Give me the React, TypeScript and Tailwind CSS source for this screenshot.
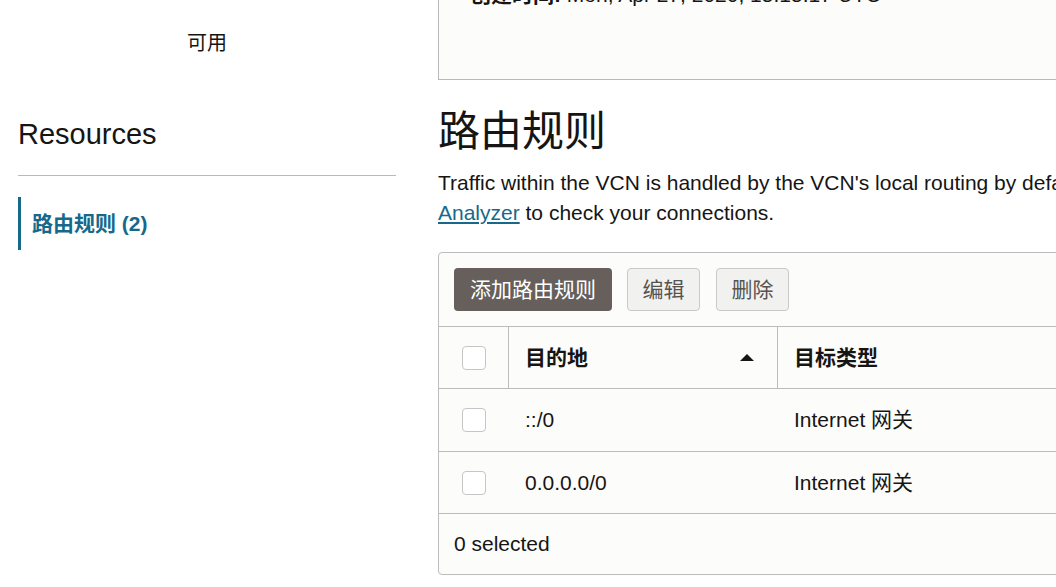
const font = "font-['Liberation_Sans','Noto_Sans_CJK_SC',sans-serif]";

function Checkbox() {
  return <span className="block h-6 w-6 rounded-[4px] border border-[#c6c6c4] bg-white" />;
}

const rows = [
  { dest: "::/0", type: "Internet 网关", h: "h-[63px]" },
  { dest: "0.0.0.0/0", type: "Internet 网关", h: "h-[62px]" },
];

export default function App() {
  return (
    <div className={`${font} h-[587px] w-[1056px] overflow-hidden bg-white text-[21px] text-[#161513]`}>
      <div className="flex gap-6">
        {/* sidebar */}
        <aside className="w-[414px] shrink-0 px-[18px]">
          <p className="mt-[30px] text-center text-[20px] leading-[26px]">可用</p>
          <h2 className="mt-[61px] text-[29px] leading-[34px]">Resources</h2>
          <hr className="mt-[24px] border-t border-[#b9b9b7]" />
          <nav className="mt-[21px]">
            <a className="flex h-[53px] items-center border-l-[3px] border-[#16698a] pl-[11px] font-bold text-[#16698a]">
              路由规则 (2)
            </a>
          </nav>
        </aside>

        {/* main */}
        <main className="w-[800px] shrink-0">
          <div className="-mt-[30px] h-[110px] whitespace-nowrap border border-[#b9b9b7] bg-[#fcfcfb] px-[31px] pt-[12px] leading-6">
            <span className="font-bold">创建时间:</span> Mon, Apr 27, 2020, 15:15:17 UTC
          </div>

          <h1 className="mt-[27px] text-[42px] font-normal leading-[50px]">路由规则</h1>
          <p className="mt-[11px] whitespace-nowrap leading-[30px]">
            Traffic within the VCN is handled by the VCN's local routing by default. Use Network Path
            <br />
            <a className="text-[#16698a] underline">Analyzer</a> to check your connections.
          </p>

          <div className="mt-[24px] rounded-[4px] border border-[#bcbcba] bg-[#fcfcfb]">
            <div className="flex px-[15px] py-[15px]">
              <button className="h-[43px] w-[158px] rounded-[4px] bg-[#665f5b] text-white">添加路由规则</button>
              <button className="ml-[15px] h-[43px] w-[73px] rounded-[4px] border border-[#c9c9c7] bg-[#f1f1f0] text-[#565451]">
                编辑
              </button>
              <button className="ml-[16px] h-[43px] w-[73px] rounded-[4px] border border-[#c9c9c7] bg-[#f1f1f0] text-[#565451]">
                删除
              </button>
            </div>

            <div className="grid grid-cols-[70px_269px_1fr] border-t border-[#bcbcba]">
              <div className="flex h-[61px] items-center justify-center border-r border-[#bcbcba]">
                <Checkbox />
              </div>
              <div className="flex items-center justify-between border-r border-[#bcbcba] pl-4 pr-[23px] font-bold">
                目的地
                <svg width="14" height="7" viewBox="0 0 14 7">
                  <path d="M7 0 L14 7 L0 7 Z" fill="#161513" />
                </svg>
              </div>
              <div className="flex items-center pl-4 font-bold">目标类型</div>

              {rows.map((r) => (
                <div key={r.dest} className="contents">
                  <div className={`flex ${r.h} items-center justify-center border-t border-[#bcbcba]`}>
                    <Checkbox />
                  </div>
                  <div className="flex items-center border-t border-[#bcbcba] pl-4">{r.dest}</div>
                  <div className="flex items-center border-t border-[#bcbcba] pl-4">{r.type}</div>
                </div>
              ))}
            </div>

            <div className="flex h-[61px] items-center border-t border-[#bcbcba] pl-[15px]">0 selected</div>
          </div>
        </main>
      </div>
    </div>
  );
}
